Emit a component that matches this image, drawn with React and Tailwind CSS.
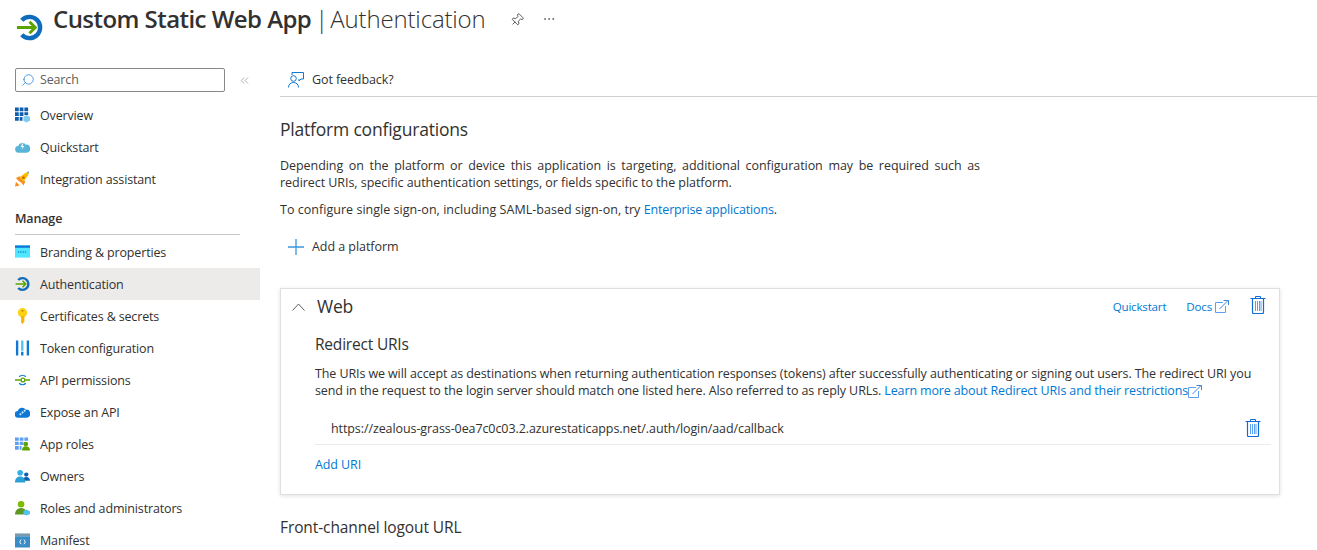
import { ChevronsLeft, Ellipsis, Pin, Search } from "lucide-react";

const font = { fontFamily: '"Open Sans", "Noto Sans", sans-serif' };

const AuthIcon = ({ size = 16 }) => (
  <svg width={size} height={size} viewBox="0 0 28 28" fill="none">
    <path d="M6 6.5A11 11 0 1 1 6 21.5" stroke="#0f6cbd" strokeWidth="4.5" />
    <path d="M1 14h19M14 8l6 6-6 6" stroke="#5ba300" strokeWidth="3" />
  </svg>
);

const OverviewIcon = () => (
  <svg width="16" height="16" viewBox="0 0 16 16">
    <path fill="#0f5fae" d="M0 0h4v4H0zM5 0h4v4H5zM10 0h4v4h-4zM0 5h4v4H0zM5 5h4v4H5zM10 5h4v3h-4zM0 10h4v4H0zM5 10h3v4H5z" />
    <path fill="#7fcdec" d="M12 8l4 2v4l-4 2-3-2v-4z" />
  </svg>
);

const QuickstartIcon = () => (
  <svg width="16" height="16" viewBox="0 0 16 16">
    <path fill="#59b4d9" d="M4 14a3.5 3.5 0 0 1-.6-7A4.5 4.5 0 0 1 11.5 5.500 4 4 0 0 1 12.500 14z" />
    <path fill="#fff" d="M8 4l-2 4h2l-1 3 3-4H8l1-3z" />
  </svg>
);

const RocketIcon = () => (
  <svg width="16" height="16" viewBox="0 0 16 16">
    <path fill="#f78d1e" d="M1 7l4-2 6 6-2 4-2-3-3-2zM0 16l1-5 4 4z" />
    <path fill="#ffb900" d="M4.500 6.500L11 1.500l4-1.500-1 4-5 7z" />
    <circle cx="9" cy="6.500" r="1.300" fill="#b85c00" />
    <path fill="#3a96dd" d="M13 .5l2-.5-.5 2z" />
  </svg>
);

const BrandingIcon = () => (
  <svg width="16" height="16" viewBox="0 0 16 16">
    <path fill="#50e6ff" d="M0 1h16v13H0z" />
    <path fill="#0f78d4" d="M0 1h16v2.500H0z" />
    <path stroke="#0f5fae" strokeDasharray="1.500 1" d="M3 8h10" />
  </svg>
);

const KeyIcon = () => (
  <svg width="16" height="18" viewBox="0 0 16 18">
    <circle cx="8" cy="5.500" r="5" fill="#fcd116" />
    <path fill="#f7b500" d="M6.500 9h3.500v6l-2 2.500-1.500-1.500z" />
    <circle cx="8" cy="3.500" r="1" fill="#b07b00" />
  </svg>
);

const TokenIcon = () => (
  <svg width="16" height="16" viewBox="0 0 16 16">
    <path fill="#0f78d4" d="M1 0h2.500v16H1zM12.500 0H15v16h-2.500z" />
    <path fill="#50c4ee" d="M6.500 0H9v11H6.500z" />
    <path fill="#0f78d4" d="M6.500 12H9v4H6.500z" />
  </svg>
);

const ApiIcon = () => (
  <svg width="16" height="16" viewBox="0 0 16 16" fill="none">
    <path d="M4.500 4.500a5 5 0 0 1 7 0M4.500 11.500a5 5 0 0 0 7 0" stroke="#0f78d4" strokeWidth="1.500" />
    <path d="M0 8h6M11 8h5" stroke="#5ba300" strokeWidth="1.500" />
    <circle cx="8.500" cy="8" r="2" stroke="#5ba300" strokeWidth="1.500" />
  </svg>
);

const ExposeIcon = () => (
  <svg width="16" height="16" viewBox="0 0 16 16">
    <path fill="#0f78d4" d="M3.500 14a3.500 3.500 0 0 1-.6-7A4.800 4.800 0 0 1 11.500 5.500 4 4 0 0 1 12.500 14z" />
    <path stroke="#cfe8f7" strokeWidth="2" strokeDasharray="2 1" d="M5 11l6-5" />
  </svg>
);

const AppRolesIcon = () => (
  <svg width="16" height="16" viewBox="0 0 16 16">
    <path fill="#5ea0ef" d="M0 1h4v3.500H0zM5 1h4v3.500H5zM10 1h4v3.500h-4zM0 5.500h4V9H0zM5 5.500h4V9H5zM0 10h4v4H0zM5 10h2v4H5z" />
    <circle cx="11.500" cy="8" r="2.500" fill="#5ba300" />
    <path fill="#5ba300" d="M7.500 15c0-3 1.500-4.500 4-4.500s4.500 1.500 4.500 4.500z" />
  </svg>
);

const OwnersIcon = () => (
  <svg width="16" height="16" viewBox="0 0 16 16">
    <circle cx="12" cy="6.500" r="2.300" fill="#0f5fae" />
    <path fill="#0f5fae" d="M8 13c0-2.500 1.500-4 4-4s4 1.500 4 4z" />
    <circle cx="5.500" cy="4.500" r="3" fill="#32b0e7" />
    <path fill="#2aa0d4" d="M0 15c0-4 2-6.500 5.500-6.500S11 11 11 15z" />
  </svg>
);

const RolesIcon = () => (
  <svg width="16" height="16" viewBox="0 0 16 16">
    <circle cx="6.500" cy="4" r="3.500" fill="#7fba00" />
    <path fill="#5e9624" d="M0 15c0-4 2.500-7 6.500-7s6 3 6 7z" />
    <path fill="#50c4ee" d="M12 9.500l4 2v3l-4 1.500-3-1.500v-3z" />
  </svg>
);

const ManifestIcon = () => (
  <svg width="16" height="16" viewBox="0 0 16 16">
    <path fill="#7a99ac" d="M0 1h16v3H0z" />
    <path fill="#3a8cc4" d="M0 4h16v12H0z" />
    <path stroke="#fff" fill="none" d="M6.500 7.500L5 10l1.500 2.500M9.500 7.500L11 10l-1.500 2.500" />
  </svg>
);

const FeedbackIcon = () => (
  <svg width="16" height="16" viewBox="0 0 16 16" fill="none" stroke="#0f78d4">
    <path d="M4 3V.5h11.500v6.500H13l-2 2V7" />
    <circle cx="5.500" cy="6.500" r="2.800" fill="#fff" />
    <path d="M.5 15.500c0-3 2-5 5-5s5 2 5 5" />
  </svg>
);

const PlusIcon = () => (
  <svg width="16" height="16" viewBox="0 0 16 16" stroke="#3a96dd" strokeWidth="1.300">
    <path d="M8 0v16M0 8h16" />
  </svg>
);

const CollapseIcon = () => (
  <svg width="13" height="8" viewBox="0 0 13 8" fill="none" stroke="#605e5c">
    <path d="M.5 7.500l6-6.500 6 6.500" />
  </svg>
);

const OpenIcon = () => (
  <svg width="14" height="13" viewBox="0 0 14 13" fill="none" stroke="#5ea0ef" className="inline-block">
    <path d="M8 2.500H.500v10h10V6" />
    <path d="M4.500 9L13 .5M8.500.5H13.500V5" stroke="#3a86d8" />
  </svg>
);

const TrashIcon = () => (
  <svg width="16" height="18" viewBox="0 0 16 18" fill="none" stroke="#0f6cd8">
    <path d="M.5 2.500h15M5.500 2.500v-2h5v2" />
    <path d="M2.500 2.500v14a1 1 0 0 0 1 1h9a1 1 0 0 0 1-1v-14" strokeWidth="1.200" />
    <path d="M5.500 5v10M7.500 5v10M9.500 5v10M11 5v10" stroke="#5ea0ef" />
  </svg>
);

const topItems = [
  { label: "Overview", Icon: OverviewIcon },
  { label: "Quickstart", Icon: QuickstartIcon },
  { label: "Integration assistant", Icon: RocketIcon },
];

const manageItems = [
  { label: "Branding & properties", Icon: BrandingIcon },
  { label: "Authentication", Icon: AuthIcon, active: true },
  { label: "Certificates & secrets", Icon: KeyIcon },
  { label: "Token configuration", Icon: TokenIcon },
  { label: "API permissions", Icon: ApiIcon },
  { label: "Expose an API", Icon: ExposeIcon },
  { label: "App roles", Icon: AppRolesIcon },
  { label: "Owners", Icon: OwnersIcon },
  { label: "Roles and administrators", Icon: RolesIcon },
  { label: "Manifest", Icon: ManifestIcon },
];

const NavRow = ({ label, Icon, active }) => (
  <div className={`flex h-8 shrink-0 items-center gap-[10px] pl-[15px] ${active ? "bg-[#edebe9]" : ""}`}>
    <span className="flex w-[15px] justify-center">
      <Icon />
    </span>
    <span className="pt-[2px] text-[12.500px] tracking-[-0.15px] text-[#323130]">{label}</span>
  </div>
);

export default function App() {
  return (
    <div style={font} className="h-[550px] w-[1317px] overflow-hidden bg-white text-[#323130]">
      <header className="flex h-[68px] items-start">
        <div className="mt-[14px] ml-[16px]">
          <AuthIcon size={27} />
        </div>
        <h1 className="mt-[1px] ml-[10px] flex text-[24px] leading-9">
          <span className="font-semibold tracking-[-0.55px]">Custom Static Web App</span>
          <span className="ml-[4px] font-light">|</span>
          <span className="ml-[2px] font-light tracking-[-0.15px]">Authentication</span>
        </h1>
        <Pin size={14} strokeWidth={1.300} className="mt-[13px] ml-[24px] rotate-45" />
        <Ellipsis size={14} strokeWidth={1.300} className="mt-[12px] ml-[18px] text-[#605e5c]" />
      </header>

      <div className="flex">
        <aside className="flex w-[260px] shrink-0 flex-col">
          <div className="flex items-center pl-[15px]">
            <div className="flex h-[24px] w-[210px] items-center gap-[5px] rounded-[2px] border border-[#8a8886] pl-[5px]">
              <Search size={14} strokeWidth={1.200} className="-scale-x-100 text-[#0f78d4]" />
              <span className="text-[12.500px] tracking-[-0.15px] text-[#605e5c]">Search</span>
            </div>
            <ChevronsLeft size={13} strokeWidth={1.200} className="ml-[13px] text-[#8a8886]" />
          </div>
          <div className="mt-[7px] flex flex-col">
            {topItems.map((item) => (
              <NavRow key={item.label} {...item} />
            ))}
          </div>
          <div className="mx-[15px] mt-[15px] mb-[1px] w-[225px] border-b border-[#c8c6c4] pb-[6px] text-[12.500px] leading-[18px] font-semibold tracking-[-0.15px]">
            Manage
          </div>
          <div className="flex flex-col">
            {manageItems.map((item) => (
              <NavRow key={item.label} {...item} />
            ))}
          </div>
        </aside>

        <main className="ml-[20px] min-w-0 flex-1">
          <div className="flex h-[29px] items-center gap-[8px] border-b border-[#d2d0ce] pb-[4px] pl-[8px]">
            <FeedbackIcon />
            <span className="text-[12.500px] tracking-[-0.1px]">Got feedback?</span>
          </div>

          <h2 className="mt-[20px] text-[17.500px] leading-6 tracking-[-0.2px]">Platform configurations</h2>
          <p className="mt-[16px] w-[700px] text-justify text-[12.500px] leading-[17px] tracking-[-0.05px]">
            Depending on the platform or device this application is targeting, additional configuration may be required such as redirect URIs, specific authentication settings, or fields specific to the platform.
          </p>
          <p className="mt-[10px] text-[12.500px] leading-[17px] tracking-[0.03px]">
            To configure single sign-on, including SAML-based sign-on, try{" "}
            <span className="tracking-[-0.15px] text-[#0078d4]">Enterprise applications</span>.
          </p>
          <div className="mt-[20px] flex items-center gap-[8px] pl-[8px]">
            <PlusIcon />
            <span className="text-[12.500px] tracking-[-0.05px]">Add a platform</span>
          </div>

          <section className="mt-[31px] h-[207px] w-[1000px] border border-[#e1dfdd] shadow-[0_1px_4px_rgba(0,0,0,0.12)]">
            <div className="flex h-[36px] items-center pr-[13px] pl-[11px]">
              <CollapseIcon />
              <span className="mb-[2px] ml-[12px] text-[17.500px] tracking-[-0.2px]">Web</span>
              <span className="ml-auto text-[11.600px] tracking-[-0.2px] text-[#0078d4]">Quickstart</span>
              <span className="ml-[20px] flex items-center gap-[3px] text-[11.600px] tracking-[-0.2px] text-[#0078d4]">
                Docs
                <OpenIcon />
              </span>
              <span className="mb-[3px] ml-[21px]">
                <TrashIcon />
              </span>
            </div>
            <div className="pr-[8px] pl-[34px]">
              <h3 className="mt-[9px] text-[15.500px] leading-5 tracking-[-0.2px]">Redirect URIs</h3>
              <p className="mt-[11px] w-[945px] text-[12.500px] leading-[17px] tracking-[-0.105px]">
                The URIs we will accept as destinations when returning authentication responses (tokens) after successfully authenticating or signing out users. The redirect URI you send in the request to the login server should match one listed here. Also referred to as reply URLs.{" "}
                <span className="tracking-[-0.14px] text-[#0078d4]">
                  Learn more about Redirect URIs and their restrictions
                  <OpenIcon />
                </span>
              </p>
              <div className="mt-[17px] flex h-[29px] items-center border-b border-[#edebe9] pr-[10px] pl-[16px]">
                <span className="text-[12.500px] tracking-[-0.09px]">
                  https://zealous-grass-0ea7c0c03.2.azurestaticapps.net/.auth/login/aad/callback
                </span>
                <span className="mb-[3px] ml-auto">
                  <TrashIcon />
                </span>
              </div>
              <div className="mt-[11px] text-[12.500px] tracking-[-0.1px] text-[#0078d4]">Add URI</div>
            </div>
          </section>

          <h2 className="mt-[22px] text-[15.500px] leading-5 tracking-[-0.1px]">Front-channel logout URL</h2>
        </main>
      </div>
    </div>
  );
}
